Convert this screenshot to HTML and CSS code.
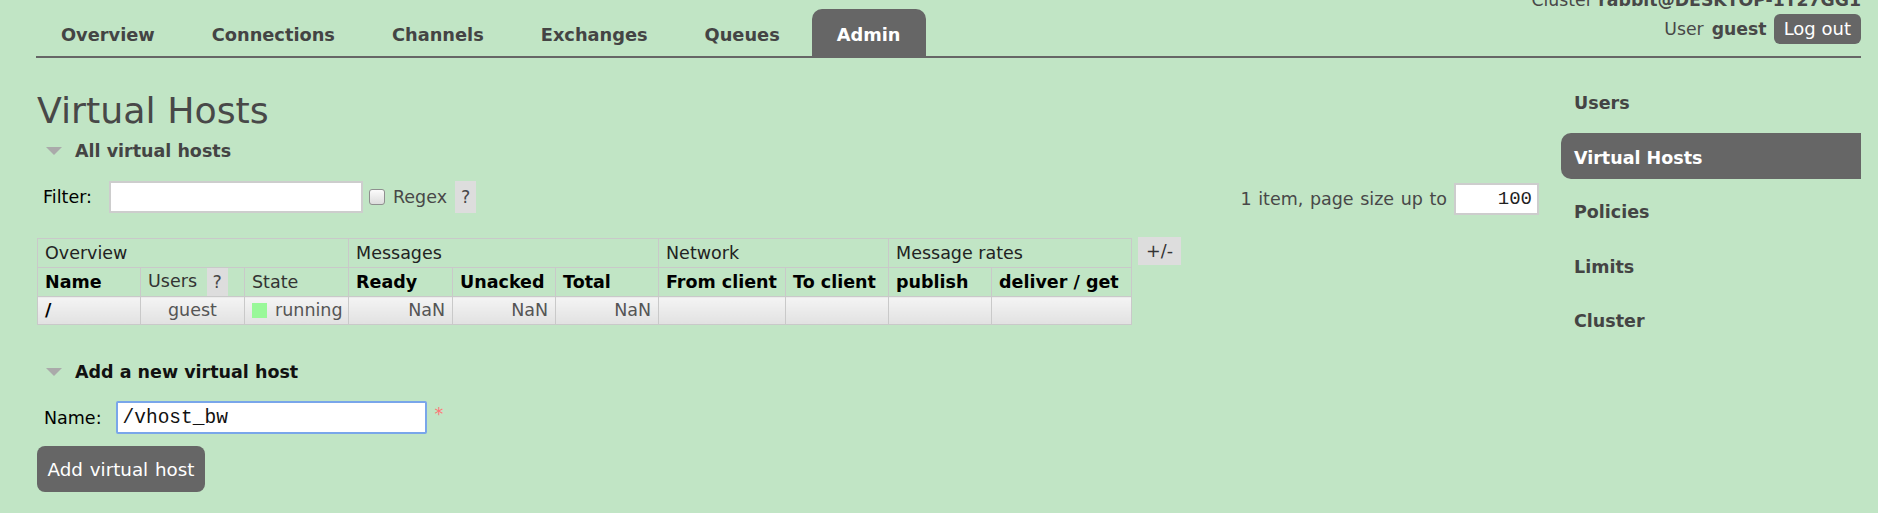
FILE: index.html
```html
<!DOCTYPE html>
<html lang="en">
<head>
<meta charset="utf-8">
<title>RabbitMQ Management - Virtual Hosts</title>
<link rel="stylesheet" href="styles.css">
</head>
<body>
<div class="topbar">
  <ul class="nav">
    <li><a>Overview</a></li>
    <li><a>Connections</a></li>
    <li><a>Channels</a></li>
    <li><a>Exchanges</a></li>
    <li><a>Queues</a></li>
    <li class="active"><a>Admin</a></li>
  </ul>
  <div class="userinfo">
    <div class="cluster">Cluster <b>rabbit@DESKTOP-1T27GG1</b></div>
    <div class="user">User <b>guest</b><span class="logout">Log out</span></div>
  </div>
</div>
<div class="page">
  <div class="main">
    <h1>Virtual Hosts</h1>
    <h2 class="section"><span class="tri"></span>All virtual hosts</h2>
    <div class="filterbar">
      <span class="flabel">Filter:</span>
      <input class="filter" type="text">
      <input class="cb" type="checkbox">
      <span class="regex">Regex</span>
      <span class="help tall">?</span>
      <div class="paging">
        <span>1 item, page size up to</span>
        <input class="pagesize" type="text" value="100">
      </div>
    </div>
    <div class="tablewrap">
      <table class="list">
        <colgroup>
          <col class="w103"><col class="w104"><col class="w104"><col class="w104"><col class="w103">
          <col class="w103"><col class="w127"><col class="w103"><col class="w103"><col class="w140">
        </colgroup>
        <thead>
          <tr class="group">
            <th colspan="3">Overview</th>
            <th colspan="3">Messages</th>
            <th colspan="2">Network</th>
            <th colspan="2">Message rates</th>
          </tr>
          <tr class="heads">
            <th>Name</th>
            <th class="plain">Users <span class="help">?</span></th>
            <th class="plain">State</th>
            <th>Ready</th>
            <th>Unacked</th>
            <th>Total</th>
            <th>From client</th>
            <th>To client</th>
            <th>publish</th>
            <th>deliver / get</th>
          </tr>
        </thead>
        <tbody>
          <tr>
            <td class="vname">/</td>
            <td class="c">guest</td>
            <td class="r"><span class="state"></span>running</td>
            <td class="r">NaN</td>
            <td class="r">NaN</td>
            <td class="r">NaN</td>
            <td></td>
            <td></td>
            <td></td>
            <td></td>
          </tr>
        </tbody>
      </table>
      <span class="plusminus">+/-</span>
    </div>
    <h2 class="section dark"><span class="tri"></span>Add a new virtual host</h2>
    <div class="namerow">
      <label class="nlabel">Name:</label>
      <input class="name" type="text" value="/vhost_bw">
      <span class="req">*</span>
    </div>
    <button class="addbtn">Add virtual host</button>
  </div>
  <ul class="sidebar">
    <li>Users</li>
    <li class="active">Virtual Hosts</li>
    <li>Policies</li>
    <li>Limits</li>
    <li>Cluster</li>
  </ul>
</div>
</body>
</html>
```
FILE: styles.css
```css
* { box-sizing: border-box; }

html, body { height: 100%; }

body {
  margin: 0;
  background: #c1e5c5;
  font-family: "DejaVu Sans", Verdana, sans-serif;
  font-size: 17.5px;
  color: #484848;
  overflow: hidden;
}

/* ---------- top bar ---------- */
.topbar {
  display: flex;
  justify-content: space-between;
  align-items: flex-end;
  height: 58px;
  margin: 0 17px 0 36px;
  border-bottom: 2px solid #666;
}

.nav {
  display: flex;
  list-style: none;
  margin: 0;
  padding: 9px 0 0 0;
}

.nav li { margin-right: 7px; }

.nav a {
  display: block;
  height: 47px;
  padding: 4px 25px 0;
  line-height: 43px;
  font-size: 17.8px;
  font-weight: bold;
  color: #444;
}

.nav li.active a {
  background: #666;
  color: #fff;
  border-radius: 10px 10px 0 0;
}

.userinfo {
  align-self: flex-start;
  margin-top: -10px;
  text-align: right;
  font-size: 17.3px;
}

.cluster { line-height: 20px; white-space: nowrap; }

.user {
  display: flex;
  align-items: center;
  justify-content: flex-end;
  height: 30px;
  margin-top: 4px;
  white-space: nowrap;
}

.user b { margin-left: 8px; }

.logout {
  display: inline-block;
  height: 30px;
  line-height: 30px;
  margin-left: 7px;
  padding: 0 10px;
  border-radius: 6px;
  background: #666;
  color: #fff;
  font-size: 18px;
}

/* ---------- layout ---------- */
.page { display: flex; }

.main {
  flex: 1;
  padding: 0 22px 0 37px;
}

h1 {
  margin: 32px 0 0;
  font-size: 36.3px;
  font-weight: normal;
  line-height: 42px;
  color: #484848;
}

.section {
  display: flex;
  align-items: center;
  margin: 7px 0 0;
  font-size: 17.5px;
  font-weight: bold;
  line-height: 24px;
  color: #444;
}

.section.dark { margin-top: 35px; color: #111; }

.tri {
  width: 0;
  height: 0;
  margin: 0 13px 0 9px;
  border-left: 8px solid transparent;
  border-right: 8px solid transparent;
  border-top: 8px solid #aaa;
}

/* ---------- filter ---------- */
.filterbar {
  display: flex;
  align-items: center;
  height: 32px;
  margin-top: 18px;
}

.flabel { margin-left: 6px; color: #000; }

.filter {
  width: 254px;
  height: 32px;
  margin: 0 0 0 17px;
  border: 2px solid #cdcdcd;
  background: #fff;
}

.cb {
  appearance: none;
  -webkit-appearance: none;
  width: 16px;
  height: 16px;
  margin: 0 0 0 6px;
  border: 1px solid #8f8f8f;
  border-radius: 3px;
  background: linear-gradient(#fbfbfb, #dcdcdc);
}

.regex { margin-left: 8px; }

.help {
  display: inline-block;
  padding: 0 6px;
  background: #ddd;
  color: #484848;
  font-weight: normal;
}

.help.tall {
  height: 32px;
  line-height: 32px;
  margin-left: 8px;
}

.paging {
  display: flex;
  align-items: center;
  margin-left: auto;
  padding-top: 4px;
  word-spacing: 1px;
}

.pagesize {
  width: 85px;
  height: 32px;
  margin-left: 7px;
  padding: 0 5px;
  border: 2px solid #cdcdcd;
  background: #fff;
  text-align: right;
  font-family: "Liberation Mono", "Courier New", monospace;
  font-size: 19px;
  color: #222;
}

/* ---------- table ---------- */
.tablewrap {
  display: flex;
  align-items: flex-start;
  margin-top: 25px;
}

.list {
  width: 1094px;
  table-layout: fixed;
  border-collapse: collapse;
  font-size: 17.5px;
}

.w103 { width: 103px; }
.w104 { width: 104px; }
.w127 { width: 127px; }
.w140 { width: 140px; }

.list th,
.list td {
  height: 29px;
  padding: 0 7px;
  border: 1px solid #c9c9c9;
  line-height: 27px;
  text-align: left;
  white-space: nowrap;
  overflow: hidden;
}

.list .group th { font-weight: normal; color: #222; }

.list .heads th { color: #000; }

.list .heads th.plain { font-weight: normal; color: #333; }

.list .heads .help {
  height: 28px;
  line-height: 28px;
  margin-left: 4px;
  vertical-align: top;
}

.list td {
  height: 28px;
  background: linear-gradient(#f4f4f4, #e1e1e1);
  color: #555;
}

.list td.vname { font-weight: bold; color: #000; }
.list td.c { text-align: center; }
.list td.r { text-align: right; }

.state {
  display: inline-block;
  width: 15px;
  height: 15px;
  margin-right: 8px;
  vertical-align: -2px;
  background: #99f899;
}

.plusminus {
  display: inline-block;
  width: 43px;
  height: 28px;
  margin: -1px 0 0 6px;
  line-height: 28px;
  text-align: center;
  background: #ddd;
  color: #333;
}

/* ---------- add form ---------- */
.namerow {
  display: flex;
  align-items: center;
  margin-top: 17px;
}

.nlabel { margin-left: 7px; color: #000; }

.name {
  width: 311px;
  height: 33px;
  margin: 0 0 0 14px;
  padding: 0 5px;
  border: 2px solid #79a6ea;
  border-radius: 2px;
  background: #fff;
  font-family: "Liberation Mono", "Courier New", monospace;
  font-size: 19.5px;
  color: #111;
}

.req {
  align-self: flex-start;
  margin: 3px 0 0 8px;
  line-height: 20px;
  color: #f77;
}

.addbtn {
  display: block;
  width: 168px;
  height: 46px;
  margin-top: 12px;
  padding: 0;
  border: none;
  border-radius: 8px;
  background: #666;
  color: #fff;
  font-family: "DejaVu Sans", Verdana, sans-serif;
  font-size: 18.3px;
  word-spacing: 1px;
}

/* ---------- sidebar ---------- */
.sidebar {
  width: 300px;
  margin: 20px 17px 0 0;
  padding: 0;
  list-style: none;
}

.sidebar li {
  height: 46px;
  margin-bottom: 8.5px;
  padding: 4px 0 0 13px;
  line-height: 42px;
  font-size: 17.5px;
  font-weight: bold;
  color: #444;
}

.sidebar li.active {
  background: #666;
  color: #fff;
  border-radius: 10px 0 0 10px;
}
```
